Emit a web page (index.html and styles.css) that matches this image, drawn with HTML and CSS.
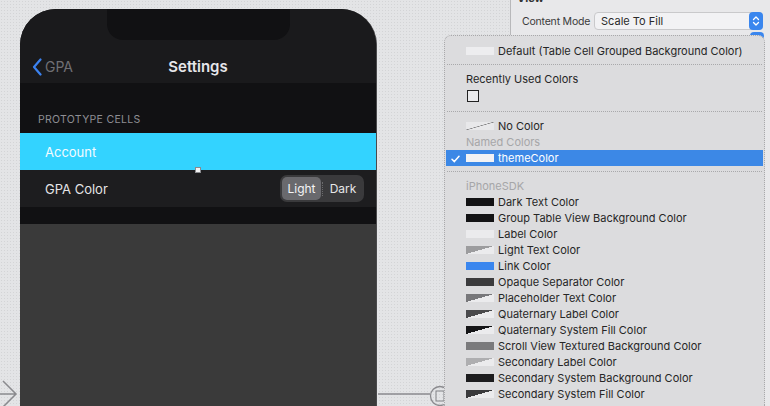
FILE: index.html
```html
<!DOCTYPE html>
<html>
<head>
<meta charset="utf-8">
<link rel="stylesheet" href="styles.css">
</head>
<body>
<div class="canvas">
  <div class="phone">
    <div class="notch"></div>
    <div class="nav">
      <div class="back">
        <svg class="chev" width="10" height="18" viewBox="0 0 10 18"><path d="M8.5 1.5 L2 9 L8.5 16.5" fill="none" stroke="#3b82f0" stroke-width="2.2" stroke-linecap="round" stroke-linejoin="round"/></svg>
        <span class="back-label">GPA</span>
      </div>
      <div class="title">Settings</div>
    </div>
    <div class="section-head">PROTOTYPE CELLS</div>
    <div class="cell cell-account">Account<span class="handle"></span></div>
    <div class="cell cell-gpa">
      <span>GPA Color</span>
      <div class="seg">
        <span class="seg-item seg-on">Light</span>
        <span class="seg-div"></span>
        <span class="seg-item">Dark</span>
      </div>
    </div>
    <div class="gap"></div>
    <div class="rest"></div>
  </div>
  <svg class="link-left" width="20" height="26" viewBox="0 0 20 26"><path d="M0 14 H16 M3 1 L16 14 L3 27" fill="none" stroke="#8a8a8e" stroke-width="1.5"/></svg>
  <svg class="link-right" width="70" height="25" viewBox="0 0 70 25"><path d="M0 13 H52" stroke="#8a8a8e" stroke-width="1.5"/><circle cx="62" cy="15" r="9.5" fill="none" stroke="#8a8a8e" stroke-width="1.3"/><rect x="58" y="10" width="8" height="10" fill="none" stroke="#8a8a8e" stroke-width="1.1"/></svg>
</div>
<div class="inspector">
  <div class="insp-title">View</div>
  <div class="insp-row">
    <span class="insp-label">Content Mode</span>
    <div class="popup">
      <span>Scale To Fill</span>
      <span class="stepper">
        <svg width="8" height="12" viewBox="0 0 8 12"><path d="M1.5 4.5 L4 2 L6.5 4.5 M1.5 7.5 L4 10 L6.5 7.5" fill="none" stroke="#fff" stroke-width="1.3" stroke-linecap="round" stroke-linejoin="round"/></svg>
      </span>
    </div>
  </div>
  <div class="stepper stepper2"></div>
</div>

<div class="menu">
  <div class="item"><span class="sw sw-default"></span>Default (Table Cell Grouped Background Color)</div>
  <div class="sep"></div>
  <div class="head head-recent">Recently Used Colors</div>
  <div class="recent-box"></div>
  <div class="sep sep-2"></div>
  <div class="item"><span class="sw sw-none"></span>No Color</div>
  <div class="head">Named Colors</div>
  <div class="item item-on">
    <svg class="check" width="9" height="8" viewBox="0 0 9 8"><path d="M1 4.2 L3.4 6.6 L8 1.2" fill="none" stroke="#fff" stroke-width="1.5" stroke-linecap="round" stroke-linejoin="round"/></svg>
    <span class="sw sw-white"></span>themeColor</div>
  <div class="sep"></div>
  <div class="head">iPhoneSDK</div>
  <div class="item"><span class="sw" style="background:#121214"></span>Dark Text Color</div>
  <div class="item"><span class="sw" style="background:#121214"></span>Group Table View Background Color</div>
  <div class="item"><span class="sw" style="background:#ebebed"></span>Label Color</div>
  <div class="item"><span class="sw sw-tri" style="--c:#9c9c9e"></span>Light Text Color</div>
  <div class="item"><span class="sw" style="background:#3a86ee"></span>Link Color</div>
  <div class="item"><span class="sw" style="background:#3b3b3d"></span>Opaque Separator Color</div>
  <div class="item"><span class="sw sw-tri" style="--c:#77777a"></span>Placeholder Text Color</div>
  <div class="item"><span class="sw sw-tri" style="--c:#4a4a4c"></span>Quaternary Label Color</div>
  <div class="item"><span class="sw sw-tri" style="--c:#151517"></span>Quaternary System Fill Color</div>
  <div class="item"><span class="sw" style="background:#7a7a7c"></span>Scroll View Textured Background Color</div>
  <div class="item"><span class="sw sw-tri" style="--c:#aeaeb0"></span>Secondary Label Color</div>
  <div class="item"><span class="sw" style="background:#1c1c1e"></span>Secondary System Background Color</div>
  <div class="item item-last"><span class="sw sw-tri" style="--c:#3a3a3c"></span>Secondary System Fill Color</div>
</div>
</body>
</html>
```

FILE: styles.css
```css
* { box-sizing: border-box; }
html, body { margin: 0; padding: 0; }
html { overflow: hidden; }
body {
  width: 770px;
  height: 406px;
  overflow: hidden;
  position: relative;
  display: flex;
  background: #e4e5e7;
  font-family: "Inter", "Noto Sans", sans-serif;
}
.canvas {
  flex: 0 0 510px;
  position: relative;
  overflow: hidden;
  background-color: #e3e4e6;
  background-image: radial-gradient(#d3d4d6 0.6px, transparent 0.8px);
  background-size: 3px 3px;
}
.phone {
  margin: 9px 0 0 20px;
  width: 357px;
  height: 397px;
  background: #111113;
  border-radius: 36px 36px 0 0;
  overflow: hidden;
  position: relative;
  display: flex;
  flex-direction: column;
  border-right: 1px solid #4a4a4c;
}
.notch {
  position: absolute;
  left: 87px;
  top: 0;
  width: 183px;
  height: 31px;
  background: #111113;
  border-radius: 0 0 16px 16px;
  z-index: 2;
}
.nav {
  height: 74px;
  flex: 0 0 74px;
  background: #1a1a1c;
  position: relative;
  display: flex;
  align-items: flex-end;
  justify-content: center;
  padding-bottom: 7px;
}
.back {
  position: absolute;
  left: 12px;
  bottom: 7px;
  display: flex;
  align-items: center;
  gap: 3px;
}
.chev { display: block; }
.back-label {
  font-size: 14px;
  color: #6f6f74;
  line-height: 18px;
}
.title {
  font-size: 15px;
  font-weight: 600;
  color: #e6e6ea;
  line-height: 18px;
}
.section-head {
  height: 50px;
  flex: 0 0 50px;
  padding: 30px 0 0 18px;
  font-size: 10.5px;
  letter-spacing: 0.3px;
  color: #8e8e93;
  line-height: 14px;
}
.cell {
  height: 37px;
  flex: 0 0 37px;
  display: flex;
  align-items: center;
  justify-content: space-between;
  padding: 0 12px 0 25px;
  font-size: 13px;
  position: relative;
}
.cell-account {
  background: #33d3ff;
  color: #f4fbff;
}
.handle {
  position: absolute;
  left: 175px;
  bottom: -3px;
  width: 6px;
  height: 6px;
  background: #f2f2f2;
  border: 1px solid #8a8a8e;
  z-index: 2;
}
.cell-gpa {
  background: #1d1d1f;
  color: #e4e4e6;
}
.seg {
  width: 84px;
  height: 27px;
  background: #3a3a3c;
  border-radius: 7px;
  display: flex;
  align-items: center;
  padding: 2px;
}
.seg-item {
  flex: 1;
  height: 23px;
  display: flex;
  align-items: center;
  justify-content: center;
  font-size: 12px;
  color: #e6e6e8;
}
.seg-on {
  flex: 0 0 39px;
  background: #69696d;
  border-radius: 5px;
  color: #f4f4f6;
}
.seg-div {
  width: 0;
  height: 14px;
  border-left: 1px dotted #6a6a6c;
  margin: 0 1px;
}
.gap {
  height: 17px;
  flex: 0 0 17px;
  background: #111113;
}
.rest {
  flex: 1;
  background: #3a3a3a;
}
.link-left {
  position: absolute;
  left: 0;
  top: 380px;
}
.link-right {
  position: absolute;
  left: 378px;
  top: 381px;
}
.inspector {
  flex: 1;
  background: #e8e8ea;
  border-left: 1px solid #b8b8ba;
  position: relative;
}
.insp-title {
  margin: -8px 0 0 6px;
  font-size: 11px;
  font-weight: 700;
  color: #333;
  line-height: 13px;
}
.insp-row {
  display: flex;
  align-items: center;
  margin-top: 7px;
  padding-left: 11px;
}
.insp-label {
  font-size: 10.5px;
  color: #3a3a3a;
  flex: 0 0 72px;
  white-space: nowrap;
  letter-spacing: -0.2px;
}
.popup {
  width: 169px;
  height: 18px;
  background: #f2f2f4;
  border: 1px solid #c9c9cb;
  border-radius: 4px;
  display: flex;
  align-items: center;
  justify-content: space-between;
  padding-left: 6px;
  font-size: 11px;
  color: #2a2a2a;
}
.stepper {
  width: 14px;
  height: 18px;
  background: #3a86ee;
  border-radius: 4px;
  display: flex;
  align-items: center;
  justify-content: center;
  margin-right: -1px;
}
.stepper2 {
  position: absolute;
  left: 239px;
  top: 32px;
  height: 8px;
}
.menu {
  position: absolute;
  left: 444px;
  top: 35px;
  width: 321px;
  height: 371px;
  overflow: hidden;
  background: #dcdcde;
  border: 1px dotted #a9a9ab;
  border-bottom: none;
  border-radius: 7px 7px 0 0;
  padding-top: 7px;
  font-size: 11px;
  color: #262626;
}
.item {
  height: 16px;
  display: flex;
  align-items: center;
  padding-left: 21px;
  position: relative;
  white-space: nowrap;
}
.sw {
  width: 28px;
  height: 8px;
  margin-right: 4px;
  flex: 0 0 28px;
}
.sw-default { background: #ededef; }
.sw-white { background: #f2f2f4; }
.sw-none {
  background: linear-gradient(to bottom right, #e8e8ea calc(50% - 0.6px), #7a7a7c 50%, #e8e8ea calc(50% + 0.6px));
}
.sw-tri {
  background: linear-gradient(to bottom right, var(--c) 50%, #ebebed 50%);
}
.item-on {
  background: #3c88e6;
  color: #fff;
  margin: 0 1px;
  padding-left: 20px;
}
.check {
  position: absolute;
  left: 5px;
  top: 5px;
}
.sep {
  margin: 5px 2px 6px;
  border-top: 1px dotted #a9a9ab;
}
.sep-2 { margin-top: 9px; }
.head {
  height: 16px;
  line-height: 16px;
  padding-left: 21px;
  color: #a6a6a8;
}
.head-recent {
  margin-top: 1px;
  color: #262626;
}
.recent-box {
  margin: 3px 0 0 22px;
  width: 12px;
  height: 12px;
  border: 1px solid #222;
  background: #ebebed;
}
```
